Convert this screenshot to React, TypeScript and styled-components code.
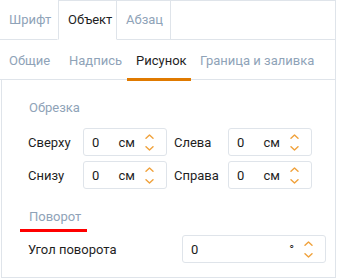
import React from "react";
import styled, { createGlobalStyle } from "styled-components";

const Global = createGlobalStyle`
  html, body { margin: 0; padding: 0; background: #ffffff; }
  body { font-family: "Roboto", "Noto Sans", sans-serif; font-size: 13px; }
  * { box-sizing: border-box; }
`;

const BORDER = "#dfe4ea";
const MUTED = "#8fa3b8";
const TEXT = "#1f1f1f";
const ORANGE = "#e07a00";
const CHEV = "#f0a23c";

const Panel = styled.div`
  width: 336px;
  height: 278px;
  display: flex;
  flex-direction: column;
`;

const TopTabs = styled.div`
  display: flex;
  height: 40px;
`;

const TopTab = styled.div<{ $active?: boolean; $first?: boolean; $w: number }>`
  width: ${(p) => p.$w}px;
  height: 40px;
  padding: 0 0 1px 9px;
  display: flex;
  align-items: center;
  white-space: nowrap;
  color: ${(p) => (p.$active ? TEXT : MUTED)};
  border-bottom: 1px solid ${(p) => (p.$active ? "transparent" : BORDER)};
  border-top: 1px solid ${(p) => (p.$first ? "transparent" : BORDER)};
  border-right: 1px solid ${(p) => (p.$first ? "transparent" : BORDER)};
  border-left: ${(p) => (p.$active ? `1px solid ${BORDER}` : "none")};
`;

const TopFill = styled.div`
  flex: 1;
  border-top: 1px solid ${BORDER};
  border-bottom: 1px solid ${BORDER};
  border-right: 1px solid ${BORDER};
`;

const SubTabs = styled.div`
  display: flex;
  height: 40px;
  border-bottom: 1px solid ${BORDER};
  border-right: 1px solid ${BORDER};
`;

const SubTab = styled.div<{ $active?: boolean; $w?: number }>`
  width: ${(p) => (p.$w ? `${p.$w}px` : "auto")};
  height: 40px;
  padding: 0 0 0 9px;
  display: flex;
  align-items: center;
  white-space: nowrap;
  color: ${(p) => (p.$active ? TEXT : MUTED)};
  position: relative;
  &::after {
    content: "";
    display: ${(p) => (p.$active ? "block" : "none")};
    position: absolute;
    left: 0;
    right: 0;
    bottom: -1px;
    height: 3px;
    background: ${ORANGE};
  }
`;

const Content = styled.div`
  flex: 1;
  margin-left: 1px;
  border-left: 1px solid ${BORDER};
  border-right: 1px solid ${BORDER};
  border-bottom: 1px solid ${BORDER};
  padding: 19px 0 0 26px;
  display: flex;
  flex-direction: column;
`;

const SectionTitle = styled.div<{ $marked?: boolean }>`
  color: ${MUTED};
  line-height: 18px;
  position: relative;
  align-self: flex-start;
  padding-left: 1px;
  &::after {
    content: "";
    display: ${(p) => (p.$marked ? "block" : "none")};
    position: absolute;
    left: -8px;
    right: -6px;
    bottom: -6px;
    height: 3px;
    background: #ff0000;
  }
`;

const CropGrid = styled.div`
  display: grid;
  grid-template-columns: 48px 84px 47px 84px;
  column-gap: 7px;
  row-gap: 5px;
  margin-top: 11px;
  align-items: center;
`;

const Label = styled.div`
  color: ${TEXT};
  white-space: nowrap;
`;

const Spin = styled.div<{ $width?: number }>`
  width: ${(p) => (p.$width ? `${p.$width}px` : "100%")};
  height: 28px;
  border: 1px solid ${BORDER};
  border-radius: 3px;
  display: flex;
  align-items: center;
  padding: 0 12px 0 8px;
  color: ${TEXT};
`;

const Value = styled.span`
  flex: 1;
  color: #1a1a1a;
`;

const Unit = styled.span`
  margin-right: 10px;
`;

const Arrows = styled.div`
  display: flex;
  flex-direction: column;
  gap: 7px;
  align-items: center;
`;

const RotateRow = styled.div`
  display: flex;
  align-items: center;
  justify-content: space-between;
  margin-top: 9px;
  padding-right: 9px;
`;

const Chevron = ({ up }: { up?: boolean }) => (
  <svg width="9" height="5" viewBox="0 0 9 5" style={{ display: "block" }}>
    <path
      d={up ? "M1 4.3 L4.5 1 L8 4.3" : "M1 0.7 L4.5 4 L8 0.7"}
      fill="none"
      stroke={CHEV}
      strokeWidth="1.4"
      strokeLinecap="round"
      strokeLinejoin="round"
    />
  </svg>
);

const Spinner = ({ unit, width }: { unit: string; width?: number }) => (
  <Spin $width={width}>
    <Value>0</Value>
    <Unit>{unit}</Unit>
    <Arrows>
      <Chevron up />
      <Chevron />
    </Arrows>
  </Spin>
);

export default function App() {
  return (
    <>
      <Global />
      <Panel>
        <TopTabs>
          <TopTab $first $w={58}>Шрифт</TopTab>
          <TopTab $active $w={59}>Объект</TopTab>
          <TopTab $w={54}>Абзац</TopTab>
          <TopFill />
        </TopTabs>
        <SubTabs>
          <SubTab $w={60}>Общие</SubTab>
          <SubTab $w={67}>Надпись</SubTab>
          <SubTab $active $w={64}>Рисунок</SubTab>
          <SubTab>Граница и заливка</SubTab>
        </SubTabs>
        <Content>
          <SectionTitle>Обрезка</SectionTitle>
          <CropGrid>
            <Label>Сверху</Label>
            <Spinner unit="см" />
            <Label>Слева</Label>
            <Spinner unit="см" />
            <Label>Снизу</Label>
            <Spinner unit="см" />
            <Label>Справа</Label>
            <Spinner unit="см" />
          </CropGrid>
          <SectionTitle $marked style={{ marginTop: 19 }}>Поворот</SectionTitle>
          <RotateRow>
            <Label>Угол поворота</Label>
            <Spinner unit="°" width={144} />
          </RotateRow>
        </Content>
      </Panel>
    </>
  );
}
